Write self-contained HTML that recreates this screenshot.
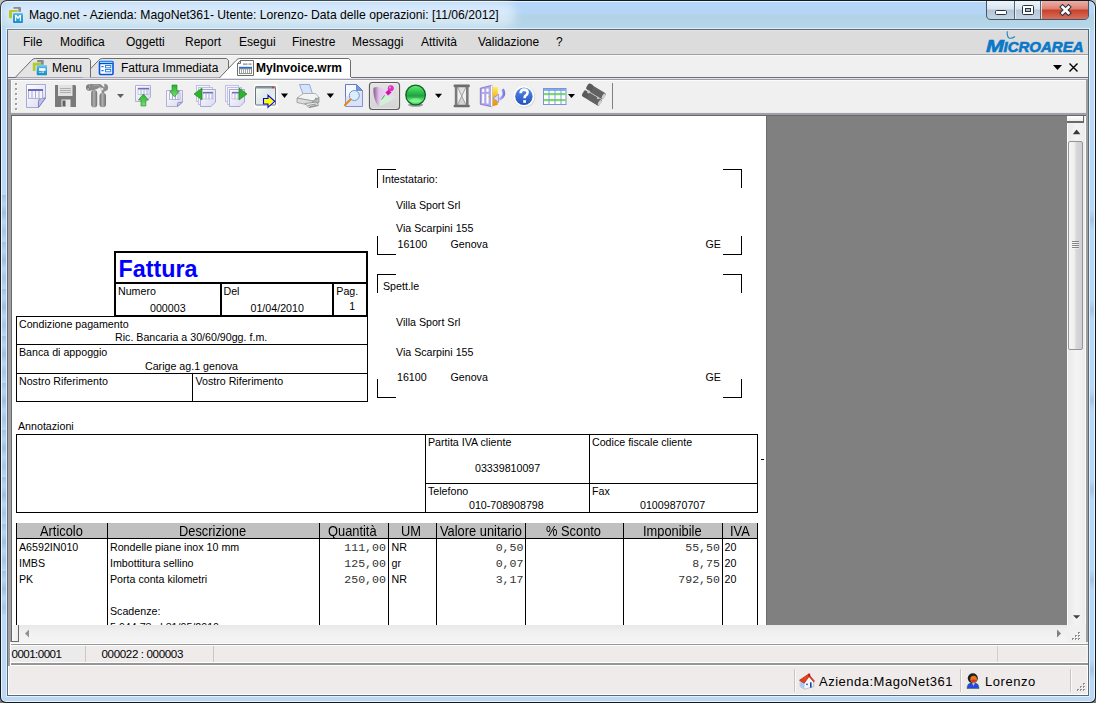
<!DOCTYPE html><html><head><meta charset="utf-8"><style>html,body{margin:0;padding:0;width:1096px;height:703px;overflow:hidden;background:#7a7a7a}body>div,body>span,body>svg{position:absolute} body span{white-space:pre;}body{font-family:'Liberation Sans',sans-serif}</style></head><body><div style="left:0;top:0;width:1096px;height:12px;background:#bcbcbc"></div>
<div style="left:0;top:0;width:1096px;height:703px;border-radius:7px 7px 6px 6px;background:#101820"></div>
<div style="left:1px;top:1px;width:1094px;height:701px;border-radius:6px 6px 5px 5px;background:#e8f4fc"></div>
<div style="left:2px;top:2px;width:1092px;height:699px;border-radius:5px 5px 4px 4px;background:linear-gradient(#b4d6f8 0px,#b6d6f6 11px,#b2d2e6 14px,#b6d8ea 27px,#bcd8f4 30px)"></div>
<div style="left:2px;top:195px;width:4px;height:420px;background:repeating-linear-gradient(#a0bedc 0px,#b6d4f2 9px,#9cbad8 18px,#b8d6f6 27px,#a4c2e0 36px,#b8d8f8 47px);opacity:0.85"></div>
<div style="left:1090px;top:140px;width:4px;height:550px;background:repeating-linear-gradient(#b8d8f8 0px,#b8d8f8 70px,#a0bedc 80px,#b8d8f8 90px);opacity:0.8"></div>
<div style="left:6px;top:29px;width:1px;height:667px;background:#e0f0fc"></div>
<div style="left:1089px;top:29px;width:1px;height:667px;background:#e0f0fc"></div>
<div style="left:6px;top:28px;width:1084px;height:1px;background:#dff0fa"></div>
<div style="left:6px;top:696px;width:1084px;height:1px;background:#e0f0fc"></div>
<div style="left:7px;top:29px;width:1082px;height:667px;background:#5a6878"></div>
<div style="left:8px;top:30px;width:1080px;height:665px;background:#f0f0f0"></div>
<div style="left:1px;top:2px;width:514px;height:25px;border-radius:10px;background:rgba(244,250,255,0.55);filter:blur(5px)"></div>
<svg style="left:9px;top:7px" width="15" height="17" viewBox="0 0 15 17"><defs><linearGradient id="ab" x1="0" y1="0" x2="0" y2="1"><stop offset="0" stop-color="#6cc4e8"/><stop offset="0.3" stop-color="#34a4d8"/><stop offset="1" stop-color="#2090c8"/></linearGradient></defs><path d="M4.5 0H11Q12 0 12 1V4.8H9.3V1.8H4.5Z" fill="#8c8c8c"/><path d="M0 4Q0 3 1 3H8.5V5H3V11.3H1Q0 11.3 0 10.3Z" fill="#b8c828"/><rect x="4" y="6" width="10" height="10" rx="1" fill="url(#ab)"/><path d="M6 14V8H7.5L9 10L10.5 8H12V14H10.8V10L9 12.2L7.2 10V14Z" fill="#fff"/></svg>
<span style="left:29px;top:9.22px;font-size:12.15px;line-height:12.15px;color:#000;font-weight:normal;font-family:'Liberation Sans',sans-serif;">Mago.net - Azienda: MagoNet361- Utente: Lorenzo- Data delle operazioni: [11/06/2012]</span>
<svg style="left:986px;top:1px" width="103" height="20" viewBox="0 0 103 20"><defs><linearGradient id="cb" x1="0" y1="0" x2="0" y2="1"><stop offset="0" stop-color="#eef4fa"/><stop offset="0.45" stop-color="#d8e4f0"/><stop offset="0.5" stop-color="#b4c6d8"/><stop offset="1" stop-color="#c4d4e4"/></linearGradient><linearGradient id="cr" x1="0" y1="0" x2="0" y2="1"><stop offset="0" stop-color="#eab0a8"/><stop offset="0.45" stop-color="#dc8070"/><stop offset="0.5" stop-color="#c84028"/><stop offset="1" stop-color="#d87060"/></linearGradient></defs><path d="M1 0V14Q1 18 5 18H98Q102 18 102 14V0Z" fill="url(#cb)"/><path d="M55 0V18H98Q102 18 102 14V0Z" fill="url(#cr)"/><path d="M0.5 0V14Q0.5 18.5 5 18.5H98Q102.5 18.5 102.5 14V0" fill="none" stroke="#4a5460"/><path d="M28.5 0V18M54.5 0V18" stroke="#5a6470" stroke-width="1"/><path d="M29.5 0V18M55.5 0V18" stroke="#f0f4f8" stroke-width="1" opacity="0.8"/><rect x="9.5" y="9.5" width="11" height="4" rx="1" fill="#fff" stroke="#2a3240"/><rect x="36.5" y="4.5" width="11" height="9" rx="1" fill="#fff" stroke="#2a3240"/><rect x="39.5" y="7.5" width="5" height="3" fill="#a8bcd0" stroke="#2a3240"/><path d="M76.5 6L82.5 12M82.5 6L76.5 12" stroke="#2a3240" stroke-width="4.6" stroke-linecap="square"/><path d="M76.5 6L82.5 12M82.5 6L76.5 12" stroke="#fff" stroke-width="2.6" stroke-linecap="square"/></svg>
<div style="left:8px;top:30px;width:1080px;height:24px;background:#dcdcdc"></div>
<div style="left:8px;top:30px;width:1080px;height:1px;background:#e6e6e6"></div>
<div style="left:8px;top:54px;width:1080px;height:1px;background:#a0a0a0"></div>
<span style="left:23px;top:35.54px;font-size:12px;line-height:12px;color:#000;font-weight:normal;font-family:'Liberation Sans',sans-serif;">File</span>
<span style="left:60px;top:35.54px;font-size:12px;line-height:12px;color:#000;font-weight:normal;font-family:'Liberation Sans',sans-serif;">Modifica</span>
<span style="left:126px;top:35.54px;font-size:12px;line-height:12px;color:#000;font-weight:normal;font-family:'Liberation Sans',sans-serif;">Oggetti</span>
<span style="left:185px;top:35.54px;font-size:12px;line-height:12px;color:#000;font-weight:normal;font-family:'Liberation Sans',sans-serif;">Report</span>
<span style="left:239px;top:35.54px;font-size:12px;line-height:12px;color:#000;font-weight:normal;font-family:'Liberation Sans',sans-serif;">Esegui</span>
<span style="left:292px;top:35.54px;font-size:12px;line-height:12px;color:#000;font-weight:normal;font-family:'Liberation Sans',sans-serif;">Finestre</span>
<span style="left:352px;top:35.54px;font-size:12px;line-height:12px;color:#000;font-weight:normal;font-family:'Liberation Sans',sans-serif;">Messaggi</span>
<span style="left:421px;top:35.54px;font-size:12px;line-height:12px;color:#000;font-weight:normal;font-family:'Liberation Sans',sans-serif;">Attività</span>
<span style="left:478px;top:35.54px;font-size:12px;line-height:12px;color:#000;font-weight:normal;font-family:'Liberation Sans',sans-serif;">Validazione</span>
<span style="left:556px;top:35.54px;font-size:12px;line-height:12px;color:#000;font-weight:normal;font-family:'Liberation Sans',sans-serif;">?</span>
<svg style="left:984px;top:30px" width="104" height="24" viewBox="0 0 104 24"><text x="2" y="21.8" font-family="Liberation Sans" font-size="17" font-weight="bold" font-style="italic" fill="#0a78c8" stroke="#0a78c8" stroke-width="0.6" textLength="18" lengthAdjust="spacingAndGlyphs">M</text><text x="19.5" y="21.8" font-family="Liberation Sans" font-size="14" font-weight="bold" font-style="italic" fill="#0a78c8" stroke="#0a78c8" stroke-width="0.6" textLength="80" lengthAdjust="spacingAndGlyphs">ICROAREA</text><path d="M23.3 1.2Q22.7 6 25 8Q27.5 9 31 6.5" fill="none" stroke="#1a88d0" stroke-width="1.1"/></svg>
<div style="left:8px;top:55px;width:1080px;height:22px;background:#f0f0f0"></div>
<div style="left:8px;top:77px;width:1080px;height:1px;background:#707070"></div>
<div style="left:8px;top:78px;width:1080px;height:1px;background:#e0e0f8"></div>
<div style="left:8px;top:79px;width:1080px;height:1px;background:#a0a0a0"></div>
<div style="left:8px;top:55px;width:1080px;height:1px;background:#fafafa"></div>
<svg style="left:0;top:55px" width="1096" height="23"><path d="M82.2 22.5L98.4 5.5Q100 3.5 102.2 3.5H226.6L228.5 5.4V22.5" fill="#e4e4e4" stroke="#6c6c6c"/><path d="M15.2 22.5L31.4 5.5Q33 3.5 35.2 3.5H88.7L90.5 5.3V22.5" fill="#e4e4e4" stroke="#6c6c6c"/><path d="M219.8 22.5L236 5.5Q237.6 3.5 239.8 3.5H348.7L350.5 5.3V22.5" fill="#ffffff" stroke="#6c6c6c"/></svg>
<div style="left:221px;top:77px;width:130px;height:1px;background:#ffffff"></div>
<svg style="left:32px;top:59px" width="16" height="17" viewBox="0 0 16 17"><path d="M5.2 1H11.7V5.8H9V3.3H5.2Z" fill="#8a8a8a"/><path d="M0.8 3.8H9V6.5H3.5V12H0.8Z" fill="#b4c828"/><defs><linearGradient id="mb" x1="0" y1="0" x2="0" y2="1"><stop offset="0" stop-color="#7cd0f0"/><stop offset="0.35" stop-color="#38a8dc"/><stop offset="1" stop-color="#1890c8"/></linearGradient></defs><rect x="4.7" y="6" width="10.3" height="10.2" rx="0.8" fill="url(#mb)"/><rect x="7" y="9.2" width="6.5" height="2.6" fill="#fff"/><rect x="7.5" y="13" width="1" height="1" fill="#fff"/><rect x="9.5" y="12.6" width="2.5" height="1" fill="#fff"/></svg>
<svg style="left:98px;top:60px" width="17" height="16" viewBox="0 0 17 16"><rect x="1.5" y="1.5" width="13.5" height="13" rx="1" fill="#fff" stroke="#0850e0" stroke-width="1.6"/><rect x="2" y="1.6" width="12.5" height="1.4" fill="#80e0ff"/><rect x="2" y="3" width="12.5" height="1.2" fill="#0a48d8"/><rect x="3.2" y="6" width="2.6" height="1.2" rx="0.6" fill="#1a70e8"/><rect x="3.2" y="10" width="2.6" height="1.2" rx="0.6" fill="#1a70e8"/><rect x="7.5" y="5.5" width="5.3" height="2.3" fill="#fff" stroke="#2a88f0" stroke-width="1"/><rect x="7.5" y="9.5" width="5.3" height="2.3" fill="#fff" stroke="#2a88f0" stroke-width="1"/></svg>
<svg style="left:237px;top:60px" width="17" height="16" viewBox="0 0 17 16"><path d="M3.5 0.5H16.5V15.5H0.5V3.5Z" fill="#fff" stroke="#6a6e6a"/><path d="M0.5 3.5H3.5V0.5" fill="none" stroke="#6a6e6a"/><rect x="6" y="3.6" width="4.5" height="1" fill="#6a6e6a"/><rect x="11.5" y="3.6" width="3" height="1" fill="#6a6e6a"/><rect x="2" y="6.8" width="13" height="2" fill="#2a68e0"/><rect x="2.5" y="8.8" width="12" height="4.8" fill="#fff" stroke="#7a7e7a" stroke-width="0.9"/><path d="M4.5 9V13.5M6.5 9V13.5M8.5 9V13.5M10.5 9V13.5M12.5 9V13.5" stroke="#9a9e9a" stroke-width="0.9"/></svg>
<span style="left:52px;top:61.54px;font-size:12px;line-height:12px;color:#000;font-weight:normal;font-family:'Liberation Sans',sans-serif;">Menu</span>
<span style="left:121px;top:61.54px;font-size:12px;line-height:12px;color:#000;font-weight:normal;font-family:'Liberation Sans',sans-serif;">Fattura Immediata</span>
<span style="left:256px;top:61.54px;font-size:12px;line-height:12px;color:#000;font-weight:bold;font-family:'Liberation Sans',sans-serif;">MyInvoice.wrm</span>
<svg style="left:1050px;top:60px" width="32" height="16"><path d="M3 5h9l-4.5 5z" fill="#000"/><path d="M19.5 3.5l8 8M27.5 3.5l-8 8" stroke="#000" stroke-width="1.4"/></svg>
<div style="left:8px;top:80px;width:1080px;height:35px;background:#a0a0a0"></div>
<div style="left:11px;top:80px;width:1075px;height:32px;background:#f0f0f0;border-left:1px solid #fcfcfc;border-top:1px solid #fcfcfc"></div>
<div style="left:11px;top:112px;width:1075px;height:1px;background:#e8e8f8"></div>
<div style="left:11px;top:115px;width:1077px;height:1px;background:#696969"></div>
<div style="left:15px;top:83px;width:2px;height:2px;background:#a0a0a0;box-shadow:1px 1px 0 #fff"></div>
<div style="left:15px;top:88px;width:2px;height:2px;background:#a0a0a0;box-shadow:1px 1px 0 #fff"></div>
<div style="left:15px;top:93px;width:2px;height:2px;background:#a0a0a0;box-shadow:1px 1px 0 #fff"></div>
<div style="left:15px;top:98px;width:2px;height:2px;background:#a0a0a0;box-shadow:1px 1px 0 #fff"></div>
<div style="left:15px;top:103px;width:2px;height:2px;background:#a0a0a0;box-shadow:1px 1px 0 #fff"></div>
<div style="left:15px;top:108px;width:2px;height:2px;background:#a0a0a0;box-shadow:1px 1px 0 #fff"></div>
<svg style="left:0;top:0" width="1096" height="120" viewBox="0 0 1096 120">
<defs>
<linearGradient id="pg" x1="0" y1="0" x2="1" y2="1"><stop offset="0" stop-color="#ffffff"/><stop offset="1" stop-color="#d8d8ee"/></linearGradient>
<linearGradient id="grn" x1="0" y1="0" x2="0" y2="1"><stop offset="0" stop-color="#30b030"/><stop offset="1" stop-color="#70e070"/></linearGradient>
<linearGradient id="ball" x1="0" y1="0" x2="0" y2="1"><stop offset="0" stop-color="#60f070"/><stop offset="0.45" stop-color="#28b048"/><stop offset="0.55" stop-color="#20a040"/><stop offset="0.8" stop-color="#70f080"/><stop offset="1" stop-color="#30c050"/></linearGradient>
<linearGradient id="win" x1="0" y1="0" x2="1" y2="1"><stop offset="0" stop-color="#f8fcfc"/><stop offset="0.5" stop-color="#e0e8e8"/><stop offset="1" stop-color="#f4f8f8"/></linearGradient>
<linearGradient id="btn" x1="0" y1="0" x2="0" y2="1"><stop offset="0" stop-color="#e4e4e4"/><stop offset="1" stop-color="#d4d4d4"/></linearGradient>
</defs>
<!-- 1 doc table -->
<path d="M26.5 84.5H45.5V98L38.5 107.5H26.5Z" fill="url(#pg)" stroke="#a8a8d8"/>
<path d="M45.5 98L38.5 107.5V101.5Q38.5 98.5 41.5 98.5Z" fill="#c0c0e8" stroke="#8080c0"/>
<rect x="28.5" y="89.5" width="14" height="9" fill="#f4f4fc" stroke="#b0b0d8"/>
<rect x="28" y="89" width="15" height="2" fill="#6a6ab8"/>
<path d="M32 91V98M35.5 91V98M39 91V98" stroke="#a8a8d4" stroke-width="1"/>
<!-- 2 floppy -->
<path d="M55 85H75L76 86V107H55Z" fill="#7a7a7a"/>
<rect x="58" y="85" width="14.5" height="11" fill="#e2e2e2"/>
<path d="M60 88.5H71M60 90.5H71M60 92.5H71" stroke="#a0a0a0" stroke-width="0.8"/>
<rect x="61.5" y="99.5" width="9" height="7.5" fill="#e8e8e8"/>
<path d="M62.5 100.5h3v6h-3z" fill="#606060"/>
<!-- 3 tools -->
<defs><linearGradient id="hd" x1="0" y1="0" x2="1" y2="0"><stop offset="0" stop-color="#6a6a6a"/><stop offset="0.45" stop-color="#b0b0b0"/><stop offset="1" stop-color="#6e6e6e"/></linearGradient></defs>
<circle cx="89.3" cy="87.5" r="3.3" fill="#7c7c7c"/>
<circle cx="90.3" cy="86.4" r="1.1" fill="#c8c8c8"/>
<circle cx="88.2" cy="88.8" r="0.9" fill="#b8b8b8"/>
<path d="M90 84H100L102.5 85.5L98 88.5L93 90.5L90 90Z" fill="#8a8a8a"/>
<path d="M93 85.2H99" stroke="#b4b4b4" stroke-width="0.8"/>
<circle cx="104.3" cy="87.6" r="3.8" fill="#8c8c8c"/>
<path d="M104.3 87.6L100.2 83.5H104.3Z" fill="#f0f0f0"/>
<circle cx="102.2" cy="89" r="1.2" fill="#e8e8e8"/>
<rect x="101.6" y="90.5" width="2.6" height="3.5" fill="#909090"/>
<rect x="91.2" y="90" width="6" height="17.6" rx="3" fill="url(#hd)"/>
<rect x="99.5" y="93" width="6.5" height="14.2" rx="3" fill="url(#hd)"/>
<path d="M117 94H124L120.5 98Z" fill="#606060"/>
<!-- 5 up -->
<path d="M135.5 85.5H150.5V97L146 101.5H135.5Z" fill="url(#pg)" stroke="#b0b0d8"/>
<rect x="138" y="88" width="11" height="6.5" fill="#f8f8fc" stroke="#b8b8dc" stroke-width="0.8"/>
<rect x="138" y="88" width="11" height="1.5" fill="#7070b8"/><path d="M141 89.5V94.5M144 89.5V94.5M147 89.5V94.5" stroke="#a0a0d0" stroke-width="0.9"/>
<path d="M143.4 94L148.4 100H145.8V106H141V100H138.4Z" fill="url(#grn)" stroke="#208020" stroke-width="0.6"/>
<!-- 6 down -->
<path d="M166.5 90.5H182.5V102L177.5 106.5H166.5Z" fill="url(#pg)" stroke="#b0b0d8"/>
<rect x="169.5" y="93" width="10.5" height="6.5" fill="#f8f8fc" stroke="#a8a8d4" stroke-width="0.8"/><path d="M172.5 93V99.5M175.5 93V99.5M178 93V99.5" stroke="#a0a0d0" stroke-width="0.9"/>
<path d="M182.5 102L177.5 106.5V103.5Q177.5 102.5 179 102.5Z" fill="#c8c8ec" stroke="#8080c0" stroke-width="0.8"/>
<path d="M172 85H177V91H179.3L174.5 96.8L169.7 91H172Z" fill="url(#grn)" stroke="#208020" stroke-width="0.6"/>
<!-- 7 stacked left -->
<rect x="196.5" y="85.5" width="13" height="16" fill="#f4f4fc" stroke="#c0c0e0"/>
<rect x="198.5" y="87.5" width="14" height="17" fill="#f4f4fc" stroke="#c0c0e0"/>
<path d="M200.5 89.5H215.5V102L211 106.5H200.5Z" fill="url(#pg)" stroke="#a8a8d8"/>
<rect x="203" y="92" width="10" height="7" fill="#fafafe" stroke="#c0c0e0" stroke-width="0.8"/>
<rect x="203" y="92" width="10" height="1.5" fill="#7070b8"/><path d="M206 93.5V99M209 93.5V99M212 93.5V99" stroke="#a0a0d0" stroke-width="0.9"/>
<path d="M202 88L194 94L202 100Z" fill="#30b030" stroke="#108010" stroke-width="0.6"/>
<!-- 8 stacked right -->
<rect x="225.5" y="85.5" width="13" height="16" fill="#f4f4fc" stroke="#c0c0e0"/>
<rect x="227.5" y="87.5" width="14" height="17" fill="#f4f4fc" stroke="#c0c0e0"/>
<path d="M229.5 89.5H244.5V102L240 106.5H229.5Z" fill="url(#pg)" stroke="#a8a8d8"/>
<rect x="232" y="92" width="8" height="7" fill="#fafafe" stroke="#c0c0e0" stroke-width="0.8"/>
<rect x="232" y="92" width="8" height="1.5" fill="#7070b8"/><path d="M235 93.5V99M238 93.5V99" stroke="#a0a0d0" stroke-width="0.9"/>
<path d="M239 88L247 94L239 100Z" fill="#30b030" stroke="#108010" stroke-width="0.6"/>
<!-- 9 window arrow -->
<rect x="254" y="84" width="24" height="24" fill="#fafafa"/>
<rect x="255.5" y="86.5" width="20" height="18.5" rx="1" fill="url(#win)" stroke="#6a7480"/>
<rect x="255.5" y="86.5" width="20" height="2" fill="#8a949c"/>
<rect x="272" y="86.8" width="2" height="1.4" fill="#e03030"/>
<path d="M263.5 98.5H268V95.3L274.8 101.3L268 107.3V104H263.5Z" fill="#ffff00" stroke="#0000ff" stroke-width="1.1"/>
<path d="M281 93.5H288L284.5 98Z" fill="#000"/>
<!-- 11 printer -->
<path d="M299.5 84.5H309.5L312.5 94H303Z" fill="#d4e4fa" stroke="#8898cc" stroke-width="0.8"/>
<path d="M297 98L303.5 93.5H315.5L319 97.5L313 101Z" fill="#f4f4f4" stroke="#9a9a9a" stroke-width="0.7"/>
<path d="M297 98L313 101V106L297 102.5Z" fill="#dcdcdc" stroke="#8a8a8a" stroke-width="0.7"/>
<path d="M313 101L319 97.5V102.5L313 106Z" fill="#b8b8b8" stroke="#8a8a8a" stroke-width="0.7"/>
<path d="M305 103.5L316.5 102L318.5 105.5L309 107.7Z" fill="#e8e8e8" stroke="#7a7a7a" stroke-width="0.7"/>
<path d="M308 105.5L316 104M309.5 106.8L317 105.3" stroke="#606060" stroke-width="0.6"/>
<rect x="315" y="97.8" width="1.6" height="1" fill="#30c030"/>
<path d="M326.7 93.5H334L330.35 98Z" fill="#000"/>
<!-- 13 magnifier doc -->
<path d="M345.5 84.5H356.5L362.5 90.5V106.5H345.5Z" fill="#f4f8ff" stroke="#6878c8"/>
<path d="M356.5 84.5V90.5H362.5Z" fill="#60a0e8" stroke="#6878c8" stroke-width="0.8"/>
<path d="M345.5 97L362.5 90.5V106.5H345.5Z" fill="#c8d4f4" opacity="0.6"/>
<circle cx="354.3" cy="95.5" r="5" fill="#d8f0fc" stroke="#8090c8" stroke-width="1"/>
<path d="M345 105L350.5 99.5" stroke="#e88820" stroke-width="2.2" stroke-linecap="round"/>
<!-- 14 pressed button -->
<rect x="369.5" y="82.5" width="30" height="27" rx="3" fill="url(#btn)" stroke="#5c5c5c" stroke-width="1.2"/>
<rect x="370.6" y="83.6" width="27.8" height="24.8" rx="2" fill="none" stroke="#f4f4f4" stroke-width="0.7" opacity="0.7"/>
<defs><linearGradient id="pp" x1="0" y1="0" x2="1" y2="0"><stop offset="0" stop-color="#8a5a8c"/><stop offset="0.25" stop-color="#e4c4ec"/><stop offset="1" stop-color="#f0dcf4"/></linearGradient></defs>
<path d="M373.5 88C376 86 380 87.5 383.5 89L390 92L395.5 97.5C390 101 384.5 104 379 106.5C375 103 373 95 373.5 88Z" fill="url(#pp)"/>
<path d="M381.5 97C385 94.5 389 95 393.5 98.5C389 101.5 384 104 380 106C379.5 103 380 100 381.5 97Z" fill="#cdf2d4"/>
<path d="M384.5 95.5L381.5 99.5" stroke="#6a6a6a" stroke-width="0.9"/>
<path d="M385.5 92.5L388.5 89.5L391.5 92.5L388 95.5Z" fill="#c818a8"/>
<circle cx="390.8" cy="88.3" r="3" fill="#e030c0"/>
<circle cx="390" cy="87.5" r="1" fill="#f890e8"/>
<!-- 15 green ball -->
<ellipse cx="415.6" cy="104.8" rx="7.5" ry="2" fill="#505050" opacity="0.55"/>
<circle cx="415.6" cy="95" r="9.8" fill="url(#ball)" stroke="#0a6424" stroke-width="1.3"/>
<ellipse cx="415.6" cy="100.5" rx="5" ry="2.5" fill="#a0ffb0" opacity="0.45"/>
<path d="M435 93.8H442L438.5 98Z" fill="#000"/>
<!-- 17 hourglass -->
<path d="M457.5 87H466L461.75 96Z" fill="#e0e0e0"/>
<path d="M457.5 105H466L461.75 96Z" fill="#d4d4d4"/>
<path d="M457.5 87L466 105M466 87L457.5 105" stroke="#909090" stroke-width="0.8"/>
<rect x="453.6" y="84.6" width="16.2" height="2.6" rx="1" fill="#6c6c6c"/>
<rect x="453.6" y="104.7" width="16.2" height="2.6" rx="1" fill="#6c6c6c"/>
<rect x="454.8" y="86.5" width="2.6" height="19" fill="#7a7a7a"/>
<rect x="466" y="86.5" width="2.6" height="19" fill="#7a7a7a"/>
<!-- 18 door -->
<defs><linearGradient id="dor" x1="0" y1="0" x2="0" y2="1"><stop offset="0" stop-color="#fff050"/><stop offset="0.5" stop-color="#f8b818"/><stop offset="1" stop-color="#e89000"/></linearGradient>
<linearGradient id="arw" x1="0" y1="0" x2="1" y2="0"><stop offset="0" stop-color="#f0f0ff"/><stop offset="1" stop-color="#8078d8"/></linearGradient></defs>
<path d="M492.4 87H497.8V104.8L492.4 106.2Z" fill="url(#dor)"/>
<path d="M480.3 88.2L492 85.2V106.8L480.3 104.3Z" fill="#b0a8e8" stroke="#7060c0" stroke-width="0.7"/>
<rect x="482.2" y="89" width="2" height="3" fill="#fff"/><rect x="486.4" y="88.6" width="2.2" height="3.2" fill="#fff"/>
<rect x="482.2" y="94" width="2" height="9.2" fill="#fff"/><rect x="486.4" y="94" width="2.2" height="9.5" fill="#fff"/>
<rect x="491" y="85.3" width="1.3" height="21.4" fill="#f8f8ff"/>
<circle cx="489.3" cy="96.3" r="0.9" fill="#e0b000"/>
<path d="M502.6 89.2Q505.5 94 502 97.5Q500 99.5 497.5 99.3" fill="none" stroke="url(#arw)" stroke-width="2.8"/>
<path d="M502.6 89.2Q505.5 94 502 97.5Q500 99.5 497.5 99.3" fill="none" stroke="#8a80d8" stroke-width="0.6" opacity="0.6"/>
<path d="M493.2 98.3L498.6 94.2V102.4Z" fill="#d8d8fc" stroke="#7a70d0" stroke-width="0.6"/>
<!-- 19 help -->
<circle cx="524.4" cy="96.8" r="10.8" fill="#c8c8c8" opacity="0.6"/>
<circle cx="523.9" cy="96.3" r="10.5" fill="#fff"/>
<defs><linearGradient id="hb" x1="0" y1="0" x2="0" y2="1"><stop offset="0" stop-color="#5a8ae8"/><stop offset="1" stop-color="#2050c0"/></linearGradient></defs>
<circle cx="523.9" cy="96.3" r="8.7" fill="url(#hb)"/>
<path d="M520.6 93.2Q520.8 89.6 524.2 89.6Q527.6 89.7 527.6 92.6Q527.6 94.6 525.4 95.8Q524.6 96.4 524.6 98.2" fill="none" stroke="#fff" stroke-width="2.6"/>
<rect x="523.2" y="100.2" width="2.8" height="2.6" fill="#fff"/>
<!-- 20 grid -->
<rect x="543.5" y="88.5" width="22.5" height="16" fill="#fff" stroke="#8090d0"/>
<rect x="544" y="89" width="22" height="2" fill="#80b4f0"/>
<rect x="544" y="93" width="22" height="2.2" fill="#70e070"/>
<rect x="544" y="99" width="22" height="2.2" fill="#70e070"/>
<path d="M549 89V104.5M555 89V104.5M561 89V104.5" stroke="#8898d0" stroke-width="1"/>
<path d="M568 94H575L571.5 98Z" fill="#000"/>
<!-- 22 binoculars -->
<g transform="rotate(31 596 91.5)"><rect x="590" y="88" width="16" height="7.2" rx="1.5" fill="#626262"/><rect x="585.5" y="87.6" width="6" height="7" rx="2" fill="#5a5a5a"/><ellipse cx="605" cy="91.6" rx="1.4" ry="3" fill="#d0d0d0"/></g>
<g transform="rotate(31 592 98)"><rect x="586" y="94.5" width="16" height="7.2" rx="1.5" fill="#626262"/><rect x="581.5" y="94.6" width="6" height="7" rx="2" fill="#5a5a5a"/><ellipse cx="601" cy="98.1" rx="1.4" ry="3" fill="#d0d0d0"/></g>
<circle cx="588.6" cy="91.8" r="1.6" fill="#c8c8c8"/>
<circle cx="598" cy="98" r="1.2" fill="#c0c0c0"/>
<rect x="612" y="83" width="1" height="26" fill="#808080"/>
</svg>

<div style="left:11px;top:115px;width:1076px;height:1px;background:#696969"></div>
<div style="left:11px;top:115px;width:1px;height:511px;background:#696969"></div>
<div style="left:12px;top:116px;width:754px;height:509px;background:#fff"></div>
<div style="left:766px;top:116px;width:1px;height:509px;background:#6c6c6c"></div>
<div style="left:767px;top:116px;width:300px;height:509px;background:#808080"></div>
<div style="left:114px;top:251px;width:254px;height:2px;background:#000"></div>
<div style="left:114px;top:315px;width:254px;height:2px;background:#000"></div>
<div style="left:114px;top:251px;width:2px;height:66px;background:#000"></div>
<div style="left:366px;top:251px;width:2px;height:66px;background:#000"></div>
<div style="left:114px;top:282px;width:254px;height:2px;background:#000"></div>
<div style="left:220px;top:282px;width:2px;height:35px;background:#000"></div>
<div style="left:332px;top:282px;width:2px;height:35px;background:#000"></div>
<span style="left:118.5px;top:257.58px;font-size:23.3px;line-height:23.3px;color:#0000ff;font-weight:bold;font-family:'Liberation Sans',sans-serif;">Fattura</span>
<span style="left:118px;top:286.47px;font-size:10.67px;line-height:10.67px;color:#000;font-weight:normal;font-family:'Liberation Sans',sans-serif;">Numero</span>
<span style="left:150px;top:303.37px;font-size:10.67px;line-height:10.67px;color:#000;font-weight:normal;font-family:'Liberation Sans',sans-serif;">000003</span>
<span style="left:223.5px;top:286.47px;font-size:10.67px;line-height:10.67px;color:#000;font-weight:normal;font-family:'Liberation Sans',sans-serif;">Del</span>
<span style="left:250.5px;top:303.37px;font-size:10.67px;line-height:10.67px;color:#000;font-weight:normal;font-family:'Liberation Sans',sans-serif;">01/04/2010</span>
<span style="left:336.3px;top:285.77px;font-size:10.67px;line-height:10.67px;color:#000;font-weight:normal;font-family:'Liberation Sans',sans-serif;">Pag.</span>
<span style="left:349.3px;top:301.47px;font-size:10.67px;line-height:10.67px;color:#000;font-weight:normal;font-family:'Liberation Sans',sans-serif;">1</span>
<div style="left:16px;top:316px;width:352px;height:1px;background:#000"></div>
<div style="left:16px;top:344px;width:352px;height:1px;background:#000"></div>
<div style="left:16px;top:373px;width:352px;height:1px;background:#000"></div>
<div style="left:16px;top:401px;width:352px;height:1px;background:#000"></div>
<div style="left:16px;top:316px;width:1px;height:86px;background:#000"></div>
<div style="left:367px;top:316px;width:1px;height:86px;background:#000"></div>
<div style="left:192px;top:373px;width:1px;height:29px;background:#000"></div>
<span style="left:19px;top:318.77px;font-size:10.67px;line-height:10.67px;color:#000;font-weight:normal;font-family:'Liberation Sans',sans-serif;">Condizione pagamento</span>
<span style="left:115px;top:331.57px;font-size:10.67px;line-height:10.67px;color:#000;font-weight:normal;font-family:'Liberation Sans',sans-serif;">Ric. Bancaria a 30/60/90gg. f.m.</span>
<span style="left:19px;top:346.77px;font-size:10.67px;line-height:10.67px;color:#000;font-weight:normal;font-family:'Liberation Sans',sans-serif;">Banca di appoggio</span>
<span style="left:145px;top:360.97px;font-size:10.67px;line-height:10.67px;color:#000;font-weight:normal;font-family:'Liberation Sans',sans-serif;">Carige ag.1 genova</span>
<span style="left:19px;top:375.67px;font-size:10.67px;line-height:10.67px;color:#000;font-weight:normal;font-family:'Liberation Sans',sans-serif;">Nostro Riferimento</span>
<span style="left:195.5px;top:375.67px;font-size:10.67px;line-height:10.67px;color:#000;font-weight:normal;font-family:'Liberation Sans',sans-serif;">Vostro Riferimento</span>
<div style="left:377px;top:169px;width:19px;height:1px;background:#000"></div>
<div style="left:377px;top:169px;width:1px;height:19px;background:#000"></div>
<div style="left:377px;top:254px;width:19px;height:1px;background:#000"></div>
<div style="left:377px;top:236px;width:1px;height:19px;background:#000"></div>
<div style="left:723px;top:169px;width:19px;height:1px;background:#000"></div>
<div style="left:741px;top:169px;width:1px;height:19px;background:#000"></div>
<div style="left:723px;top:254px;width:19px;height:1px;background:#000"></div>
<div style="left:741px;top:236px;width:1px;height:19px;background:#000"></div>
<div style="left:377px;top:274px;width:19px;height:1px;background:#000"></div>
<div style="left:377px;top:274px;width:1px;height:19px;background:#000"></div>
<div style="left:377px;top:397px;width:19px;height:1px;background:#000"></div>
<div style="left:377px;top:379px;width:1px;height:19px;background:#000"></div>
<div style="left:723px;top:274px;width:19px;height:1px;background:#000"></div>
<div style="left:741px;top:274px;width:1px;height:19px;background:#000"></div>
<div style="left:723px;top:397px;width:19px;height:1px;background:#000"></div>
<div style="left:741px;top:379px;width:1px;height:19px;background:#000"></div>
<span style="left:382px;top:173.77px;font-size:10.67px;line-height:10.67px;color:#000;font-weight:normal;font-family:'Liberation Sans',sans-serif;">Intestatario:</span>
<span style="left:396px;top:199.77px;font-size:10.67px;line-height:10.67px;color:#000;font-weight:normal;font-family:'Liberation Sans',sans-serif;">Villa Sport Srl</span>
<span style="left:396px;top:223.47px;font-size:10.67px;line-height:10.67px;color:#000;font-weight:normal;font-family:'Liberation Sans',sans-serif;">Via Scarpini 155</span>
<span style="left:397.5px;top:238.97px;font-size:10.67px;line-height:10.67px;color:#000;font-weight:normal;font-family:'Liberation Sans',sans-serif;">16100</span>
<span style="left:450.5px;top:238.97px;font-size:10.67px;line-height:10.67px;color:#000;font-weight:normal;font-family:'Liberation Sans',sans-serif;">Genova</span>
<span style="left:705.5px;top:238.97px;font-size:10.67px;line-height:10.67px;color:#000;font-weight:normal;font-family:'Liberation Sans',sans-serif;">GE</span>
<span style="left:383px;top:280.87px;font-size:10.67px;line-height:10.67px;color:#000;font-weight:normal;font-family:'Liberation Sans',sans-serif;">Spett.le</span>
<span style="left:396px;top:316.77px;font-size:10.67px;line-height:10.67px;color:#000;font-weight:normal;font-family:'Liberation Sans',sans-serif;">Villa Sport Srl</span>
<span style="left:396px;top:346.57px;font-size:10.67px;line-height:10.67px;color:#000;font-weight:normal;font-family:'Liberation Sans',sans-serif;">Via Scarpini 155</span>
<span style="left:397px;top:372.47px;font-size:10.67px;line-height:10.67px;color:#000;font-weight:normal;font-family:'Liberation Sans',sans-serif;">16100</span>
<span style="left:450.5px;top:372.47px;font-size:10.67px;line-height:10.67px;color:#000;font-weight:normal;font-family:'Liberation Sans',sans-serif;">Genova</span>
<span style="left:705.5px;top:372.47px;font-size:10.67px;line-height:10.67px;color:#000;font-weight:normal;font-family:'Liberation Sans',sans-serif;">GE</span>
<span style="left:18px;top:420.97px;font-size:10.67px;line-height:10.67px;color:#000;font-weight:normal;font-family:'Liberation Sans',sans-serif;">Annotazioni</span>
<div style="left:16px;top:434px;width:742px;height:1px;background:#000"></div>
<div style="left:16px;top:512px;width:742px;height:1px;background:#000"></div>
<div style="left:16px;top:434px;width:1px;height:79px;background:#000"></div>
<div style="left:757px;top:434px;width:1px;height:79px;background:#000"></div>
<div style="left:425px;top:434px;width:1px;height:79px;background:#000"></div>
<div style="left:589px;top:434px;width:1px;height:79px;background:#000"></div>
<div style="left:425px;top:483px;width:333px;height:1px;background:#000"></div>
<span style="left:428px;top:436.57px;font-size:10.67px;line-height:10.67px;color:#000;font-weight:normal;font-family:'Liberation Sans',sans-serif;">Partita IVA cliente</span>
<span style="left:475px;top:463.37px;font-size:10.67px;line-height:10.67px;color:#000;font-weight:normal;font-family:'Liberation Sans',sans-serif;">03339810097</span>
<span style="left:428px;top:486.47px;font-size:10.67px;line-height:10.67px;color:#000;font-weight:normal;font-family:'Liberation Sans',sans-serif;">Telefono</span>
<span style="left:469px;top:499.57px;font-size:10.67px;line-height:10.67px;color:#000;font-weight:normal;font-family:'Liberation Sans',sans-serif;">010-708908798</span>
<span style="left:592px;top:436.57px;font-size:10.67px;line-height:10.67px;color:#000;font-weight:normal;font-family:'Liberation Sans',sans-serif;">Codice fiscale cliente</span>
<span style="left:592px;top:486.47px;font-size:10.67px;line-height:10.67px;color:#000;font-weight:normal;font-family:'Liberation Sans',sans-serif;">Fax</span>
<span style="left:640px;top:499.57px;font-size:10.67px;line-height:10.67px;color:#000;font-weight:normal;font-family:'Liberation Sans',sans-serif;">01009870707</span>
<div style="left:761px;top:459px;width:3px;height:1px;background:#000"></div>
<div style="left:16px;top:523px;width:742px;height:15px;background:#c0c0c0"></div>
<div style="left:16px;top:538px;width:742px;height:1px;background:#000"></div>
<div style="left:16px;top:523px;width:1px;height:102px;background:#000"></div>
<div style="left:107px;top:523px;width:1px;height:102px;background:#000"></div>
<div style="left:319px;top:523px;width:1px;height:102px;background:#000"></div>
<div style="left:388px;top:523px;width:1px;height:102px;background:#000"></div>
<div style="left:436px;top:523px;width:1px;height:102px;background:#000"></div>
<div style="left:525px;top:523px;width:1px;height:102px;background:#000"></div>
<div style="left:623px;top:523px;width:1px;height:102px;background:#000"></div>
<div style="left:722px;top:523px;width:1px;height:102px;background:#000"></div>
<div style="left:757px;top:523px;width:1px;height:102px;background:#000"></div>
<span style="left:40.0px;top:525.13px;font-size:13.9px;line-height:13.9px;color:#000;font-weight:normal;font-family:'Liberation Sans',sans-serif;transform:scaleX(0.925);transform-origin:0 0">Articolo</span>
<span style="left:178.8px;top:525.13px;font-size:13.9px;line-height:13.9px;color:#000;font-weight:normal;font-family:'Liberation Sans',sans-serif;transform:scaleX(0.925);transform-origin:0 0">Descrizione</span>
<span style="left:328.3px;top:525.13px;font-size:13.9px;line-height:13.9px;color:#000;font-weight:normal;font-family:'Liberation Sans',sans-serif;transform:scaleX(0.925);transform-origin:0 0">Quantità</span>
<span style="left:400.8px;top:525.13px;font-size:13.9px;line-height:13.9px;color:#000;font-weight:normal;font-family:'Liberation Sans',sans-serif;transform:scaleX(0.925);transform-origin:0 0">UM</span>
<span style="left:439.8px;top:525.13px;font-size:13.9px;line-height:13.9px;color:#000;font-weight:normal;font-family:'Liberation Sans',sans-serif;transform:scaleX(0.925);transform-origin:0 0">Valore unitario</span>
<span style="left:546.3px;top:525.13px;font-size:13.9px;line-height:13.9px;color:#000;font-weight:normal;font-family:'Liberation Sans',sans-serif;transform:scaleX(0.925);transform-origin:0 0">% Sconto</span>
<span style="left:642.8px;top:525.13px;font-size:13.9px;line-height:13.9px;color:#000;font-weight:normal;font-family:'Liberation Sans',sans-serif;transform:scaleX(0.925);transform-origin:0 0">Imponibile</span>
<span style="left:730.3px;top:525.13px;font-size:13.9px;line-height:13.9px;color:#000;font-weight:normal;font-family:'Liberation Sans',sans-serif;transform:scaleX(0.925);transform-origin:0 0">IVA</span>
<span style="left:19px;top:542.47px;font-size:10.67px;line-height:10.67px;color:#000;font-weight:normal;font-family:'Liberation Sans',sans-serif;">A6592IN010</span>
<span style="left:110px;top:542.47px;font-size:10.67px;line-height:10.67px;color:#000;font-weight:normal;font-family:'Liberation Sans',sans-serif;">Rondelle piane inox 10 mm</span>
<span style="left:186px;width:200px;text-align:right;top:541.68px;font-size:11.6px;line-height:11.6px;font-family:'Liberation Mono',monospace;color:#333">111,00</span>
<span style="left:391.5px;top:542.47px;font-size:10.67px;line-height:10.67px;color:#000;font-weight:normal;font-family:'Liberation Sans',sans-serif;">NR</span>
<span style="left:323.5px;width:200px;text-align:right;top:541.68px;font-size:11.6px;line-height:11.6px;font-family:'Liberation Mono',monospace;color:#333">0,50</span>
<span style="left:520px;width:200px;text-align:right;top:541.68px;font-size:11.6px;line-height:11.6px;font-family:'Liberation Mono',monospace;color:#333">55,50</span>
<span style="left:724.5px;top:542.47px;font-size:10.67px;line-height:10.67px;color:#000;font-weight:normal;font-family:'Liberation Sans',sans-serif;">20</span>
<span style="left:19px;top:558.47px;font-size:10.67px;line-height:10.67px;color:#000;font-weight:normal;font-family:'Liberation Sans',sans-serif;">IMBS</span>
<span style="left:110px;top:558.47px;font-size:10.67px;line-height:10.67px;color:#000;font-weight:normal;font-family:'Liberation Sans',sans-serif;">Imbottitura sellino</span>
<span style="left:186px;width:200px;text-align:right;top:557.68px;font-size:11.6px;line-height:11.6px;font-family:'Liberation Mono',monospace;color:#333">125,00</span>
<span style="left:391.5px;top:558.47px;font-size:10.67px;line-height:10.67px;color:#000;font-weight:normal;font-family:'Liberation Sans',sans-serif;">gr</span>
<span style="left:323.5px;width:200px;text-align:right;top:557.68px;font-size:11.6px;line-height:11.6px;font-family:'Liberation Mono',monospace;color:#333">0,07</span>
<span style="left:520px;width:200px;text-align:right;top:557.68px;font-size:11.6px;line-height:11.6px;font-family:'Liberation Mono',monospace;color:#333">8,75</span>
<span style="left:724.5px;top:558.47px;font-size:10.67px;line-height:10.67px;color:#000;font-weight:normal;font-family:'Liberation Sans',sans-serif;">20</span>
<span style="left:19px;top:574.47px;font-size:10.67px;line-height:10.67px;color:#000;font-weight:normal;font-family:'Liberation Sans',sans-serif;">PK</span>
<span style="left:110px;top:574.47px;font-size:10.67px;line-height:10.67px;color:#000;font-weight:normal;font-family:'Liberation Sans',sans-serif;">Porta conta kilometri</span>
<span style="left:186px;width:200px;text-align:right;top:573.68px;font-size:11.6px;line-height:11.6px;font-family:'Liberation Mono',monospace;color:#333">250,00</span>
<span style="left:391.5px;top:574.47px;font-size:10.67px;line-height:10.67px;color:#000;font-weight:normal;font-family:'Liberation Sans',sans-serif;">NR</span>
<span style="left:323.5px;width:200px;text-align:right;top:573.68px;font-size:11.6px;line-height:11.6px;font-family:'Liberation Mono',monospace;color:#333">3,17</span>
<span style="left:520px;width:200px;text-align:right;top:573.68px;font-size:11.6px;line-height:11.6px;font-family:'Liberation Mono',monospace;color:#333">792,50</span>
<span style="left:724.5px;top:574.47px;font-size:10.67px;line-height:10.67px;color:#000;font-weight:normal;font-family:'Liberation Sans',sans-serif;">20</span>
<span style="left:110px;top:606.47px;font-size:10.67px;line-height:10.67px;color:#000;font-weight:normal;font-family:'Liberation Sans',sans-serif;">Scadenze:</span>
<span style="left:110px;top:622.47px;font-size:10.67px;line-height:10.67px;color:#000;font-weight:normal;font-family:'Liberation Sans',sans-serif;">5.944,73 al 31/05/2010</span>
<div style="left:1067px;top:116px;width:20px;height:510px;background:#f0f0f0"></div>
<div style="left:1067px;top:116px;width:1px;height:509px;background:#fbfbfb"></div>
<div style="left:1068px;top:116px;width:17px;height:509px;background:linear-gradient(90deg,#eaeaea,#f4f4f4 50%,#ececec)"></div>
<div style="left:1085px;top:116px;width:1px;height:509px;background:#fafafa"></div>
<div style="left:1086px;top:80px;width:1px;height:586px;background:#a0a0a0"></div>
<div style="left:1087px;top:80px;width:1px;height:586px;background:#a0a0a0"></div>
<div style="left:1067px;top:115px;width:17px;height:8px;background:linear-gradient(#fff,#eeeeee);border-right:1px solid #6a6a6a;border-bottom:2px solid #6a6a6a;border-top:1px solid #696969;box-sizing:border-box"></div>
<svg style="left:1067px;top:122px" width="19" height="20"><path d="M5.8 12.2H13.4L9.6 7.6Z" fill="#3a3a3a"/></svg>
<div style="left:1068px;top:141px;width:15px;height:209px;border:1px solid #959595;border-radius:2px;box-sizing:border-box;background:linear-gradient(90deg,#f4f4f4,#f0f0f0 40%,#d8d8dc 55%,#cdcdd2)"></div>
<svg style="left:1068px;top:238px" width="15" height="14"><path d="M4 3.5H11M4 5.5H11M4 7.5H11M4 9.5H11" stroke="#6a6a6a" stroke-width="0.9"/><path d="M4 4.3H11M4 6.3H11M4 8.3H11M4 10.3H11" stroke="#fff" stroke-width="0.6"/></svg>
<svg style="left:1067px;top:605px" width="19" height="20"><path d="M6 10.2H13.2L9.6 13.8Z" fill="#404040"/></svg>
<div style="left:11px;top:625px;width:1076px;height:17px;background:linear-gradient(#e8e8e8,#f0f0f0 40%,#f4f4f4)"></div>
<div style="left:11px;top:625px;width:1px;height:17px;background:#696969"></div>
<div style="left:12px;top:625px;width:7px;height:17px;background:linear-gradient(90deg,#fafafa,#ececec);border-right:1px solid #696969;border-bottom:1px solid #696969;box-sizing:border-box"></div>
<div style="left:8px;top:80px;width:1px;height:586px;background:#a0a0a0"></div>
<div style="left:9px;top:80px;width:1px;height:586px;background:#a0a0a0"></div>
<div style="left:10px;top:80px;width:1px;height:562px;background:#a0a0a0"></div>
<svg style="left:20px;top:625px" width="16" height="17"><path d="M9 4.5V12.5L5 8.5Z" fill="#909090"/></svg>
<svg style="left:1050px;top:625px" width="16" height="17"><path d="M7 4.5V12.5L11 8.5Z" fill="#808080"/></svg>
<div style="left:1067px;top:625px;width:19px;height:17px;background:#f0f0f0"></div>
<div style="left:1086px;top:625px;width:1px;height:17px;background:#a0a0a0"></div>
<div style="left:1087px;top:625px;width:1px;height:17px;background:#a0a0a0"></div>
<svg style="left:1065px;top:625px" width="19" height="17"><g fill="#8a8a8a"><rect x="13" y="7" width="2" height="2"/><rect x="10" y="10" width="2" height="2"/><rect x="13" y="10" width="2" height="2"/><rect x="7" y="13" width="2" height="2"/><rect x="10" y="13" width="2" height="2"/><rect x="13" y="13" width="2" height="2"/></g><g fill="#fff"><rect x="14" y="8" width="1" height="1"/><rect x="11" y="11" width="1" height="1"/><rect x="14" y="11" width="1" height="1"/><rect x="8" y="14" width="1" height="1"/><rect x="11" y="14" width="1" height="1"/><rect x="14" y="14" width="1" height="1"/></g></svg>
<div style="left:8px;top:642px;width:1080px;height:25px;background:#f0f0f0"></div>
<div style="left:11px;top:643px;width:1075px;height:1px;background:#ffffff"></div>
<div style="left:8px;top:644px;width:1080px;height:1px;background:#969696"></div>
<div style="left:8px;top:645px;width:1080px;height:1px;background:#ffffff"></div>
<div style="left:11px;top:646px;width:1075px;height:16px;background:#ebebeb"></div>
<div style="left:8px;top:662px;width:1080px;height:1px;background:#ffffff"></div>
<div style="left:8px;top:663px;width:1080px;height:1px;background:#969696"></div>
<div style="left:8px;top:664px;width:1080px;height:1px;background:#969696"></div>
<div style="left:8px;top:665px;width:1080px;height:1px;background:#ffffff"></div>
<div style="left:8px;top:642px;width:1px;height:24px;background:#a0a0a0"></div>
<div style="left:9px;top:642px;width:1px;height:24px;background:#a0a0a0"></div>
<div style="left:10px;top:642px;width:1px;height:24px;background:#ffffff"></div>
<div style="left:85px;top:646px;width:1px;height:16px;background:#c8c8c8"></div>
<div style="left:86px;top:646px;width:1px;height:16px;background:#f2eaea"></div>
<div style="left:87px;top:646px;width:999px;height:16px;background:#efebeb"></div>
<div style="left:213px;top:646px;width:1px;height:16px;background:#c8c8c8"></div>
<div style="left:214px;top:646px;width:1px;height:16px;background:#f2eaea"></div>
<div style="left:997px;top:646px;width:1px;height:16px;background:#d0d0d0"></div>
<span style="left:11.5px;top:648.08px;font-size:11.6px;line-height:11.6px;color:#000;font-weight:normal;font-family:'Liberation Sans',sans-serif;letter-spacing:-0.55px">0001:0001</span>
<span style="left:101.5px;top:648.08px;font-size:11.6px;line-height:11.6px;color:#000;font-weight:normal;font-family:'Liberation Sans',sans-serif;letter-spacing:-0.37px">000022 : 000003</span>
<div style="left:8px;top:666px;width:1080px;height:29px;background:#efebeb"></div>
<div style="left:8px;top:694px;width:1080px;height:1px;background:#ffffff"></div>
<div style="left:8px;top:666px;width:1px;height:29px;background:#ffffff"></div>
<div style="left:1087px;top:666px;width:1px;height:29px;background:#ffffff"></div>
<div style="left:794px;top:669px;width:1px;height:23px;background:#c8c4c4"></div>
<div style="left:795px;top:669px;width:1px;height:23px;background:#fbf8f8"></div>
<div style="left:960px;top:669px;width:1px;height:23px;background:#c8c4c4"></div>
<div style="left:961px;top:669px;width:1px;height:23px;background:#fbf8f8"></div>
<div style="left:1070px;top:669px;width:1px;height:23px;background:#c8c4c4"></div>
<div style="left:1071px;top:669px;width:1px;height:23px;background:#fbf8f8"></div>
<svg style="left:798px;top:672px" width="18" height="18" viewBox="0 0 18 18"><path d="M2.2 8.5V14.5L6.5 17.2L15.7 14.6V8.8L11.2 2.5Z" fill="#f4f8fc" stroke="#a0a890" stroke-width="0.6"/><path d="M2.2 8.5V14.5L6.5 17.2V10Z" fill="#a8ccf4"/><path d="M1.5 8.2L10.5 2.2L16.5 9.2L15.6 9.8L11 4.5L6.2 11.2Z" fill="#e04818" stroke="#c01810" stroke-width="0.7"/><rect x="10.2" y="1.6" width="2" height="3" fill="#c81810"/><rect x="12" y="10.3" width="1.6" height="5.3" fill="#1840b0"/><circle cx="9" cy="12.3" r="0.9" fill="#1848c0"/></svg>
<span style="left:819px;top:675.00px;font-size:13px;line-height:13px;color:#000;font-weight:normal;font-family:'Liberation Sans',sans-serif;letter-spacing:0.5px">Azienda:MagoNet361</span>
<svg style="left:965px;top:672px" width="16" height="18" viewBox="0 0 16 18"><path d="M2 16.5Q2 10.5 8 10.5Q14 10.5 14 16.5Z" fill="#2848e0" stroke="#1a6a30" stroke-width="0.5"/><path d="M7 11L8.5 14L10 11Z" fill="#a8d0f8"/><circle cx="7.8" cy="6.2" r="5" fill="#202020"/><ellipse cx="8.6" cy="7.3" rx="3.3" ry="3.6" fill="#e87818"/><ellipse cx="8.6" cy="8.7" rx="2.6" ry="1.2" fill="#d83030"/></svg>
<span style="left:985px;top:675.00px;font-size:13px;line-height:13px;color:#000;font-weight:normal;font-family:'Liberation Sans',sans-serif;letter-spacing:0.55px">Lorenzo</span>
<svg style="left:1074px;top:680px" width="14" height="14"><g fill="#909090"><rect x="9" y="3" width="2" height="2"/><rect x="6" y="6" width="2" height="2"/><rect x="9" y="6" width="2" height="2"/><rect x="3" y="9" width="2" height="2"/><rect x="6" y="9" width="2" height="2"/><rect x="9" y="9" width="2" height="2"/></g><g fill="#fff"><rect x="10" y="4" width="1" height="1"/><rect x="7" y="7" width="1" height="1"/><rect x="10" y="7" width="1" height="1"/><rect x="4" y="10" width="1" height="1"/><rect x="7" y="10" width="1" height="1"/><rect x="10" y="10" width="1" height="1"/></g></svg></body></html>
